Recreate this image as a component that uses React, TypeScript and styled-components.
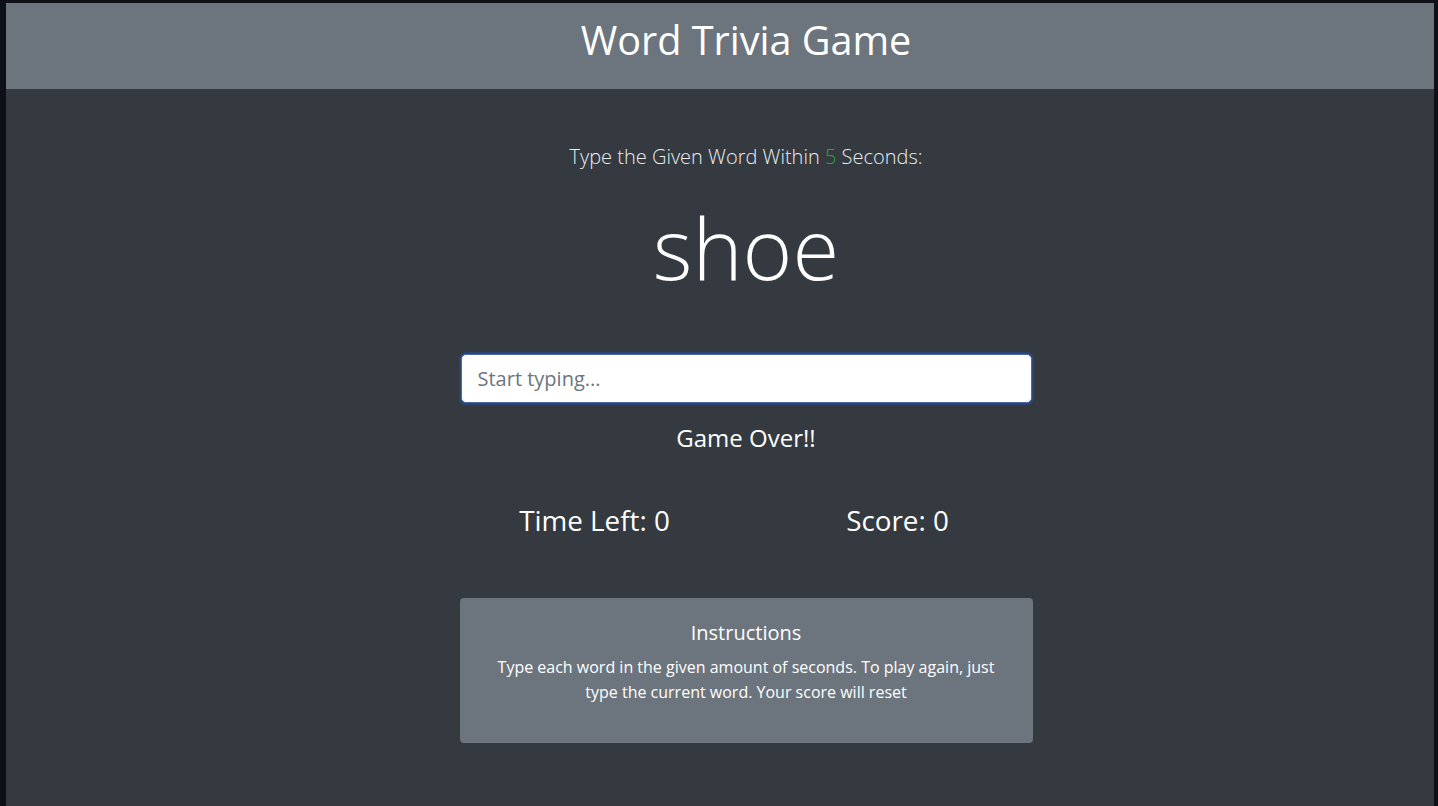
import React from "react";
import styled, { createGlobalStyle } from "styled-components";

const GlobalStyle = createGlobalStyle`
  html, body { margin: 0; padding: 0; background: #0d1117; }
  body { font-family: "Open Sans", "Noto Sans", "Liberation Sans", sans-serif; }
  * { box-sizing: border-box; }
`;

const Frame = styled.div`
  width: 1438px;
  height: 806px;
  padding: 3px 4px 0 6px;
  background: #0d1117;
  overflow: hidden;
`;

const Page = styled.div`
  height: 100%;
  background: #343a40;
  color: #fff;
  display: flex;
  flex-direction: column;
`;

const Header = styled.header`
  height: 86px;
  background: #6c757d;
  display: flex;
  align-items: center;
  justify-content: center;
  padding: 0 0 10px 52px;
`;

const Title = styled.h1`
  margin: 0;
  font-size: 39.6px;
  font-weight: 400;
  line-height: 1.2;
  color: #fff;
`;

const Main = styled.main`
  display: flex;
  flex-direction: column;
  align-items: center;
  padding: 53px 0 0 52px;
`;

const Lead = styled.p`
  margin: 0;
  font-size: 20px;
  font-weight: 300;
  line-height: 30px;
  color: #e9ecef;
`;

const Accent = styled.span`
  color: #28a745;
`;

const Word = styled.h2`
  margin: 24px 0 0;
  font-size: 85px;
  font-weight: 300;
  line-height: 1.2;
  color: #fff;
`;

const Input = styled.input`
  margin-top: 56px;
  width: 571px;
  height: 49px;
  padding: 8px 16px;
  font-family: inherit;
  font-size: 20px;
  color: #495057;
  background: #fff;
  border: 1px solid #4a6aa0;
  border-radius: 5px;
  box-shadow: 0 0 0 2px #2b4572;
  outline: none;
  &::placeholder { color: #6c757d; }
`;

const Status = styled.h4`
  margin: 20px 0 0;
  font-size: 24px;
  font-weight: 400;
  line-height: 29px;
  color: #fff;
`;

const Stats = styled.div`
  margin-top: 51px;
  width: 606px;
  display: grid;
  grid-template-columns: 1fr 1fr;
`;

const Stat = styled.h3`
  margin: 0;
  text-align: center;
  font-size: 27.8px;
  font-weight: 400;
  line-height: 34px;
  color: #fff;
`;

const Card = styled.section`
  margin-top: 61px;
  width: 573px;
  height: 145px;
  background: #6c757d;
  border-radius: 4px;
  padding: 21px 30px;
  text-align: center;
`;

const CardTitle = styled.h5`
  margin: 0 0 8px;
  font-size: 20px;
  font-weight: 400;
  line-height: 28px;
  color: #fff;
`;

const CardText = styled.p`
  margin: 0;
  font-size: 16px;
  line-height: 25px;
  color: #fff;
`;

export default function App() {
  return (
    <>
      <GlobalStyle />
      <Frame>
        <Page>
          <Header>
            <Title>Word Trivia Game</Title>
          </Header>
          <Main>
            <Lead>
              Type the Given Word Within <Accent>5</Accent> Seconds:
            </Lead>
            <Word>shoe</Word>
            <Input type="text" placeholder="Start typing..." autoFocus />
            <Status>Game Over!!</Status>
            <Stats>
              <Stat>Time Left: 0</Stat>
              <Stat>Score: 0</Stat>
            </Stats>
            <Card>
              <CardTitle>Instructions</CardTitle>
              <CardText>
                Type each word in the given amount of seconds. To play again, just type the current word. Your score will reset
              </CardText>
            </Card>
          </Main>
        </Page>
      </Frame>
    </>
  );
}
